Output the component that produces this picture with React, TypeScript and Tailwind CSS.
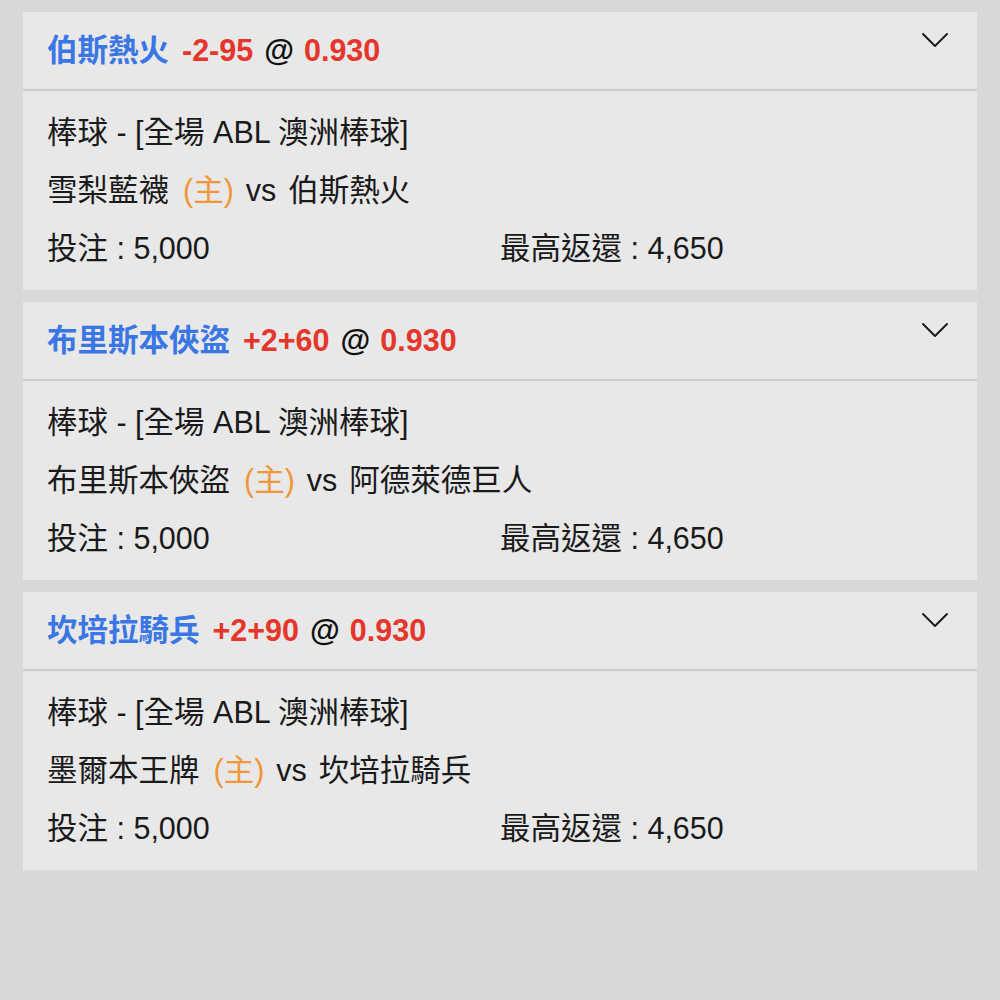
const bets = [
  {
    pick: "伯斯熱火",
    line: "-2-95",
    odds: "0.930",
    home: "雪梨藍襪",
    away: "伯斯熱火",
  },
  {
    pick: "布里斯本俠盜",
    line: "+2+60",
    odds: "0.930",
    home: "布里斯本俠盜",
    away: "阿德萊德巨人",
  },
  {
    pick: "坎培拉騎兵",
    line: "+2+90",
    odds: "0.930",
    home: "墨爾本王牌",
    away: "坎培拉騎兵",
  },
];

function Chevron() {
  return (
    <svg width="28" height="16" viewBox="0 0 28 16" fill="none" className="shrink-0">
      <polyline
        points="2,2 14,14 26,2"
        stroke="#1c1c1c"
        strokeWidth="2"
        strokeLinecap="round"
        strokeLinejoin="round"
      />
    </svg>
  );
}

export default function App() {
  return (
    <div
      className="min-h-[1000px] w-full bg-[#d8d8d8] px-[23px] pt-[12px] text-[#1a1a1a]"
      style={{
        fontFamily:
          '"Liberation Sans", "Noto Sans CJK TC", "Noto Sans CJK SC", sans-serif',
      }}
    >
      <div className="flex flex-col gap-[12px]">
        {bets.map((b, i) => (
          <div key={i} className="bg-[#e8e8e8]">
            <div className="flex h-[79px] items-start justify-between border-b-2 border-[#cbcbcb] pl-[24px] pr-[28px]">
              <div className="flex h-[77px] items-center text-[30.5px] font-bold">
                <span className="text-[#3a76e4]">{b.pick}</span>
                <span className="ml-[13px] text-[#e5362c]">{b.line}</span>
                <span className="ml-[11px] text-[#111]">@</span>
                <span className="ml-[10px] text-[#e5362c]">{b.odds}</span>
              </div>
              <div className="pt-[20px]">
                <Chevron />
              </div>
            </div>
            <div className="px-[24px] pb-[13px] pt-[12px] text-[30.5px] leading-[58px]">
              <div>棒球 - [全場 ABL 澳洲棒球]</div>
              <div>
                {b.home}
                <span className="ml-[14px] text-[#f0973a]">(主)</span>
                <span className="ml-[12px]">vs</span>
                <span className="ml-[12px]">{b.away}</span>
              </div>
              <div className="grid grid-cols-2">
                <div>投注 : 5,000</div>
                <div>最高返還 : 4,650</div>
              </div>
            </div>
          </div>
        ))}
      </div>
    </div>
  );
}
